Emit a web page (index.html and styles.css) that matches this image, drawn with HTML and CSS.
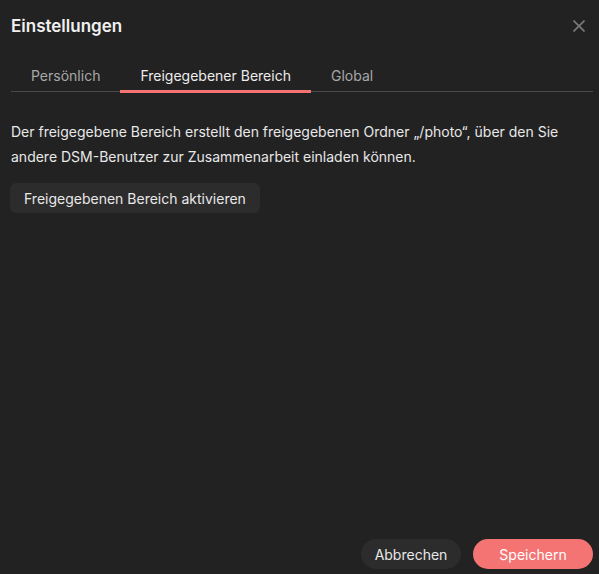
FILE: index.html
```html
<!DOCTYPE html>
<html lang="de">
<head>
<meta charset="utf-8">
<link rel="stylesheet" href="styles.css">
</head>
<body>
<div class="dialog">
  <header class="header">
    <h1 class="title">Einstellungen</h1>
    <button class="close" aria-label="Schließen">
      <svg width="12" height="12" viewBox="0 0 12 12"><path d="M0.5 0.5L11.5 11.5M11.5 0.5L0.5 11.5" stroke="#7a7a7a" stroke-width="1.6" fill="none"/></svg>
    </button>
  </header>
  <nav class="tabs">
    <div class="tab">Persönlich</div>
    <div class="tab active">Freigegebener Bereich</div>
    <div class="tab">Global</div>
  </nav>
  <main class="content">
    <p class="desc">Der freigegebene Bereich erstellt den freigegebenen Ordner „/photo“, über den Sie andere DSM-Benutzer zur Zusammenarbeit einladen können.</p>
    <button class="btn-secondary">Freigegebenen Bereich aktivieren</button>
  </main>
  <footer class="footer">
    <button class="pill pill-cancel">Abbrechen</button>
    <button class="pill pill-save">Speichern</button>
  </footer>
</div>
</body>
</html>
```

FILE: styles.css
```css
html, body {
  margin: 0;
  padding: 0;
  height: 100%;
  background: #222222;
}
body {
  font-family: Inter, "Noto Sans", sans-serif;
  color: #e6e6e6;
}
.dialog {
  height: 574px;
  box-sizing: border-box;
  display: flex;
  flex-direction: column;
  padding: 0 6px 5px 11px;
}
.header {
  display: flex;
  align-items: center;
  justify-content: space-between;
  height: 51px;
}
.title {
  margin: 0;
  font-size: 17px;
  font-weight: 600;
  color: #f0f0f0;
}
.close {
  background: none;
  border: 0;
  padding: 0;
  margin-right: 8px;
  width: 12px;
  height: 12px;
  display: flex;
}
.tabs {
  margin-top: 9px;
  display: flex;
  border-bottom: 1px solid #4a4a4a;
  height: 32px;
  box-sizing: border-box;
}
.tab {
  padding: 0 20px;
  font-size: 14px;
  color: #a8a8a8;
  line-height: 32px;
  height: 31px;
  box-sizing: border-box;
  position: relative;
}
.tab.active {
  color: #ececec;
}
.tab.active::after {
  content: "";
  position: absolute;
  left: 0;
  right: 0;
  bottom: -2px;
  height: 3px;
  background: #f47272;
}
.content {
  flex: 1;
  padding-top: 27px;
}
.desc {
  margin: 0;
  font-size: 14px;
  line-height: 25px;
  color: #e8e8e8;
}
.btn-secondary {
  margin-top: 14px;
  font-family: inherit;
  font-size: 14px;
  color: #e8e8e8;
  background: #2c2c2c;
  border: 0;
  border-radius: 6px;
  height: 30px;
  padding: 0 14px;
  margin-left: -1px;
}
.footer {
  display: flex;
  justify-content: flex-end;
  gap: 12px;
}
.pill {
  font-family: inherit;
  font-size: 14px;
  border: 0;
  border-radius: 15px;
  height: 30px;
  padding: 0;
}
.pill-cancel {
  width: 100px;
  background: #2c2c2c;
  color: #e8e8e8;
}
.pill-save {
  width: 120px;
  background: #f47474;
  color: #ffffff;
}
```
